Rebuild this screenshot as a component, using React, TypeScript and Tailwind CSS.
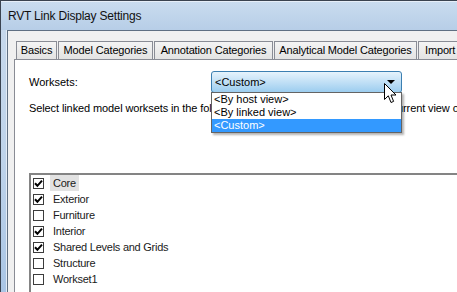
import { Fragment } from 'react';

const tabs = [
  { label: 'Basics', cls: 'w-[41px]' },
  { label: 'Model Categories', cls: 'w-[95px]' },
  { label: 'Annotation Categories', cls: 'w-[119px]' },
  { label: 'Analytical Model Categories', cls: 'w-[143px]' },
  { label: 'Import Categories', cls: 'w-[100px] justify-start pl-[6px]' },
];

const worksets: [string, boolean][] = [
  ['Core', true],
  ['Exterior', true],
  ['Furniture', false],
  ['Interior', true],
  ['Shared Levels and Grids', true],
  ['Structure', false],
  ['Workset1', false],
];

function CheckBox({ checked }: { checked: boolean }) {
  return (
    <div className="w-[11px] h-[11px] border border-[#3c3c3c] bg-white flex items-center justify-center shrink-0">
      {checked && (
        <svg width="9" height="9" viewBox="0 0 9 9">
          <polyline points="1,4.2 3.4,6.8 8,1.6" fill="none" stroke="#000" strokeWidth="2" />
        </svg>
      )}
    </div>
  );
}

export default function App() {
  return (
    <div className="relative w-[457px] h-[292px] overflow-hidden flex flex-col bg-[#bcd2ea] border-l border-t border-[#3a4350] font-['Liberation_Sans',Arial,sans-serif] text-black">
      {/* title bar */}
      <div className="h-[29px] shrink-0 flex items-center pl-[7px] bg-linear-to-b from-[#c9dcef] to-[#b7cee7] border-t border-[#e6eef8]">
        <span className="text-[12px] tracking-[-0.2px] text-[#111]">RVT Link Display Settings</span>
      </div>

      <div className="flex-1 flex min-h-0">
        <div className="w-[6px] shrink-0 bg-linear-to-b from-[#c6d8ec] via-[#bed3ea] to-[#a9c5e5] border-r border-[#e3ecf6]" />

        {/* client area */}
        <div className="flex-1 min-w-0 flex flex-col bg-[#f0f0f0] border-l border-t border-[#5f6f82] pt-[10px] pl-[6px]">
          <div className="h-[18px] shrink-0 flex gap-[1px] pl-[2px]">
            {tabs.map((t) => (
              <div
                key={t.label}
                className={`${t.cls} h-full shrink-0 flex items-center justify-center border border-b-0 border-[#898c95] bg-linear-to-b from-[#f4f4f4] to-[#e3e3e3] text-[11px] tracking-[-0.15px] whitespace-nowrap overflow-hidden`}
              >
                {t.label}
              </div>
            ))}
          </div>

          {/* tab page */}
          <div className="flex-1 min-h-0 flex flex-col bg-white border-l border-t border-[#898c95] pl-[14px] pt-[11px] text-[11px]">
            <div className="flex items-center">
              <span className="w-[182px] shrink-0">Worksets:</span>
              <div className="relative">
                <div className="w-[191px] h-[22px] flex items-center justify-between pl-[3px] pr-[6px] rounded-[3px] border border-[#3c7fb1] bg-linear-to-b from-[#e6f3fc] to-[#9ccdef]">
                  <span>&lt;Custom&gt;</span>
                  <svg width="8" height="4" viewBox="0 0 8 4">
                    <polygon points="0,0 8,0 4,4" fill="#000" />
                  </svg>
                </div>
                <div className="absolute left-0 top-[21px] z-10 w-[191px] flex flex-col border border-[#646464] bg-white shadow-[2px_2px_2px_rgba(0,0,0,0.3)]">
                  <div className="h-[13px] leading-[13px] pl-[2px]">&lt;By host view&gt;</div>
                  <div className="h-[13px] leading-[13px] pl-[2px]">&lt;By linked view&gt;</div>
                  <div className="h-[13px] leading-[13px] pl-[2px] bg-[#3399ff] text-white">&lt;Custom&gt;</div>
                </div>
              </div>
            </div>

            <p className="mt-[9px] leading-[13px] whitespace-nowrap tracking-[-0.1px]">
              Select linked model worksets in the following list to make them visible in the current view of the host model.
            </p>

            {/* worksets list */}
            <div className="mt-[58px] flex-1 flex flex-col border-l-2 border-t-2 border-[#848484] pl-[2px] text-[#1a1a1a] tracking-[-0.25px]">
              {worksets.map(([name, checked], i) => (
                <Fragment key={name}>
                  <div className="h-[16px] shrink-0 flex items-center">
                    <CheckBox checked={checked} />
                    <span className={`ml-[6px] px-[3px] h-[16px] leading-[16px] ${i === 0 ? 'bg-[#e2e2e2]' : ''}`}>{name}</span>
                  </div>
                </Fragment>
              ))}
            </div>
          </div>
        </div>
      </div>

      {/* mouse pointer */}
      <svg className="absolute left-[383px] top-[82px] z-20" width="13" height="21" viewBox="0 0 13 21">
        <path d="M0.5 0.5 L0.5 16.5 L4.3 12.8 L7 19.5 L9.6 18.4 L7 12 L12 12 Z" fill="#fff" stroke="#000" strokeWidth="1" strokeLinejoin="miter" />
      </svg>
    </div>
  );
}
